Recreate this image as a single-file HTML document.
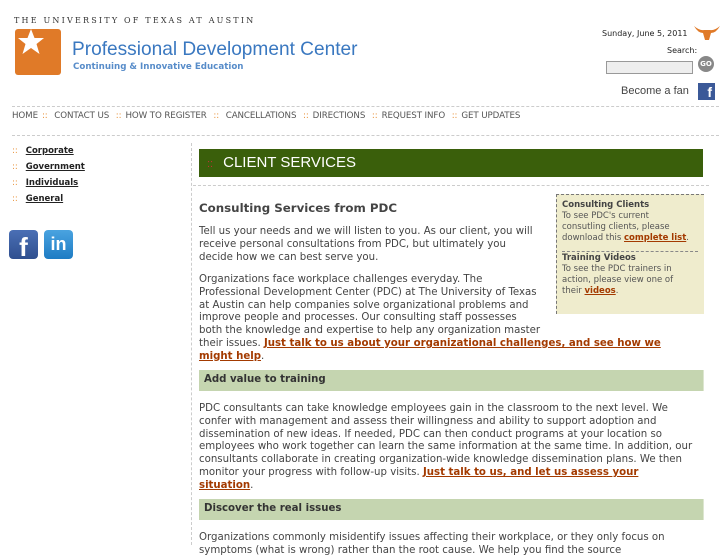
<!DOCTYPE html>
<html><head><meta charset="utf-8"><style>
*{margin:0;padding:0;box-sizing:border-box}
body{width:727px;height:545px;overflow:hidden;background:#fff;font-family:"DejaVu Sans","Liberation Sans",sans-serif;color:#444;position:relative}
.a{position:absolute}
p.t{position:absolute;left:199px;font-size:10.2px;line-height:12.8px;color:#444;white-space:nowrap}
a.l{color:#a33a00;font-weight:bold;text-decoration:underline}
.bar{position:absolute;left:199px;width:505px;height:21px;background:#c5d5b0;font-size:10.2px;font-weight:bold;color:#333;padding:4px 0 0 5px;border-right:1px solid #dde6d0}
.nav{position:absolute;left:12px;top:111px;font-size:8.7px;color:#555;white-space:nowrap;letter-spacing:-.1px}
.nav b{color:#e8923a;font-weight:normal;margin:0 4px}
.side{position:absolute;left:12px;font-size:8.5px;white-space:nowrap}
.side b{color:#e8923a;font-weight:normal;margin-right:8px}
.side u{color:#222;font-weight:bold}
</style></head><body>
<div class="a" style="left:14px;top:16px;font-family:'DejaVu Serif',serif;font-size:8px;letter-spacing:2.2px;color:#333">THE UNIVERSITY OF TEXAS AT AUSTIN</div>
<div class="a" style="left:15px;top:29px;width:46px;height:46px;background:#e07a28;border-radius:3px"></div>
<svg class="a" style="left:17px;top:28px" width="28" height="28" viewBox="0 0 28 28"><polygon points="14,1 17.5,10 27,10 19.5,16 22.5,26 14,20 5.5,26 8.5,16 1,10 10.5,10" fill="#fff"/></svg>
<div class="a" style="left:72px;top:39px;font-family:'Liberation Sans',sans-serif;font-size:19.1px;color:#3a78c0;white-space:nowrap">Professional Development Center</div>
<div class="a" style="left:73px;top:62px;font-size:8.7px;color:#3a78c0;font-weight:bold;white-space:nowrap;opacity:.85">Continuing &amp; Innovative Education</div>
<div class="a" style="left:602px;top:29px;font-size:8px;color:#222;white-space:nowrap">Sunday, June 5, 2011</div>
<svg class="a" style="left:694px;top:25px" width="26" height="16" viewBox="0 0 26 16"><path d="M0 1 Q6 6 10 5 L16 5 Q20 6 26 1 Q22 8 17 8 L15 15 L11 15 L9 8 Q4 8 0 1Z" fill="#e07a28"/></svg>
<div class="a" style="left:667px;top:46px;font-size:8px;color:#222">Search:</div>
<div class="a" style="left:606px;top:61px;width:87px;height:13px;border:1px solid #999;background:#eee"></div>
<div class="a" style="left:698px;top:56px;width:16px;height:16px;border-radius:50%;background:#888;color:#fff;font-size:7px;font-weight:bold;text-align:center;line-height:16px">GO</div>
<div class="a" style="left:621px;top:85px;font-family:'Liberation Sans',sans-serif;font-size:11px;color:#444">Become a fan</div>
<div class="a" style="left:698px;top:83px;width:17px;height:17px;background:#3b5998;color:#fff;font-family:'Liberation Sans';font-weight:bold;font-size:14px;text-align:right;padding-right:3px;line-height:19px">f</div>
<div class="a" style="left:12px;top:106px;width:707px;border-top:1px dashed #ccc"></div>
<div class="nav">HOME<b>::</b> CONTACT US <b>::</b>HOW TO REGISTER <b>::</b> CANCELLATIONS <b>::</b>DIRECTIONS <b>::</b>REQUEST INFO <b>::</b>GET UPDATES</div>
<div class="a" style="left:12px;top:135px;width:707px;border-top:1px dashed #ccc"></div>
<div class="side" style="top:146px"><b>::</b><u>Corporate</u></div>
<div class="side" style="top:162px"><b>::</b><u>Government</u></div>
<div class="side" style="top:178px"><b>::</b><u>Individuals</u></div>
<div class="side" style="top:194px"><b>::</b><u>General</u></div>
<div class="a" style="left:9px;top:230px;width:29px;height:29px;border-radius:4px;background:linear-gradient(#4a6fb5,#2f4f8f);color:#fff;font-family:'Liberation Sans';font-weight:bold;font-size:26px;text-align:center;line-height:34px;overflow:hidden">f</div>
<div class="a" style="left:44px;top:230px;width:29px;height:29px;border-radius:4px;background:linear-gradient(#4aa3e0,#1e7cc4);color:#fff;font-family:'Liberation Sans';font-weight:bold;font-size:18px;text-align:center;line-height:29px">in</div>
<div class="a" style="left:191px;top:143px;height:402px;border-left:1px dashed #ccc"></div>
<div class="a" style="left:199px;top:149px;width:504px;height:28px;background:#3a5f0b;color:#fff;font-family:'Liberation Sans';font-size:15px;padding:5px 0 0 8px;white-space:nowrap"><span style="color:#b33;margin-right:10px;font-size:11px">::</span>CLIENT SERVICES</div>
<div class="a" style="left:193px;top:185px;width:516px;border-top:1px dashed #ccc"></div>
<div class="a" style="left:556px;top:194px;width:148px;height:120px;background:#efeccd;border-left:1px dashed #777;border-top:1px dashed #777;padding:5px 0 0 5px;font-size:8.5px;line-height:11px;color:#555;white-space:nowrap">
<b style="color:#444">Consulting Clients</b><br>To see PDC's current<br>consutling clients, please<br>download this <a class="l">complete list</a>.
<div style="border-top:1px dashed #888;width:136px;margin:7px 0 1px"></div>
<b style="color:#444">Training Videos</b><br>To see the PDC trainers in<br>action, please view one of<br>their <a class="l">videos</a>.</div>
<div class="a" style="left:199px;top:201px;font-size:11.8px;font-weight:bold;color:#444;white-space:nowrap">Consulting Services from PDC</div>
<p class="t" style="top:226px">Tell us your needs and we will listen to you. As our client, you will<br>receive personal consultations from PDC, but ultimately you<br>decide how we can best serve you.</p>
<p class="t" style="top:274px">Organizations face workplace challenges everyday. The<br>Professional Development Center (PDC) at The University of Texas<br>at Austin can help companies solve organizational problems and<br>improve people and processes. Our consulting staff possesses<br>both the knowledge and expertise to help any organization master<br>their issues. <a class="l">Just talk to us about your organizational challenges, and see how we<br>might help</a>.</p>
<div class="bar" style="top:370px">Add value to training</div>
<p class="t" style="top:403px">PDC consultants can take knowledge employees gain in the classroom to the next level. We<br>confer with management and assess their willingness and ability to support adoption and<br>dissemination of new ideas. If needed, PDC can then conduct programs at your location so<br>employees who work together can learn the same information at the same time. In addition, our<br>consultants collaborate in creating organization-wide knowledge dissemination plans. We then<br>monitor your progress with follow-up visits. <a class="l">Just talk to us, and let us assess your<br>situation</a>.</p>
<div class="bar" style="top:499px">Discover the real issues</div>
<p class="t" style="top:532px">Organizations commonly misidentify issues affecting their workplace, or they only focus on<br>symptoms (what is wrong) rather than the root cause. We help you find the source</p>
</body></html>
